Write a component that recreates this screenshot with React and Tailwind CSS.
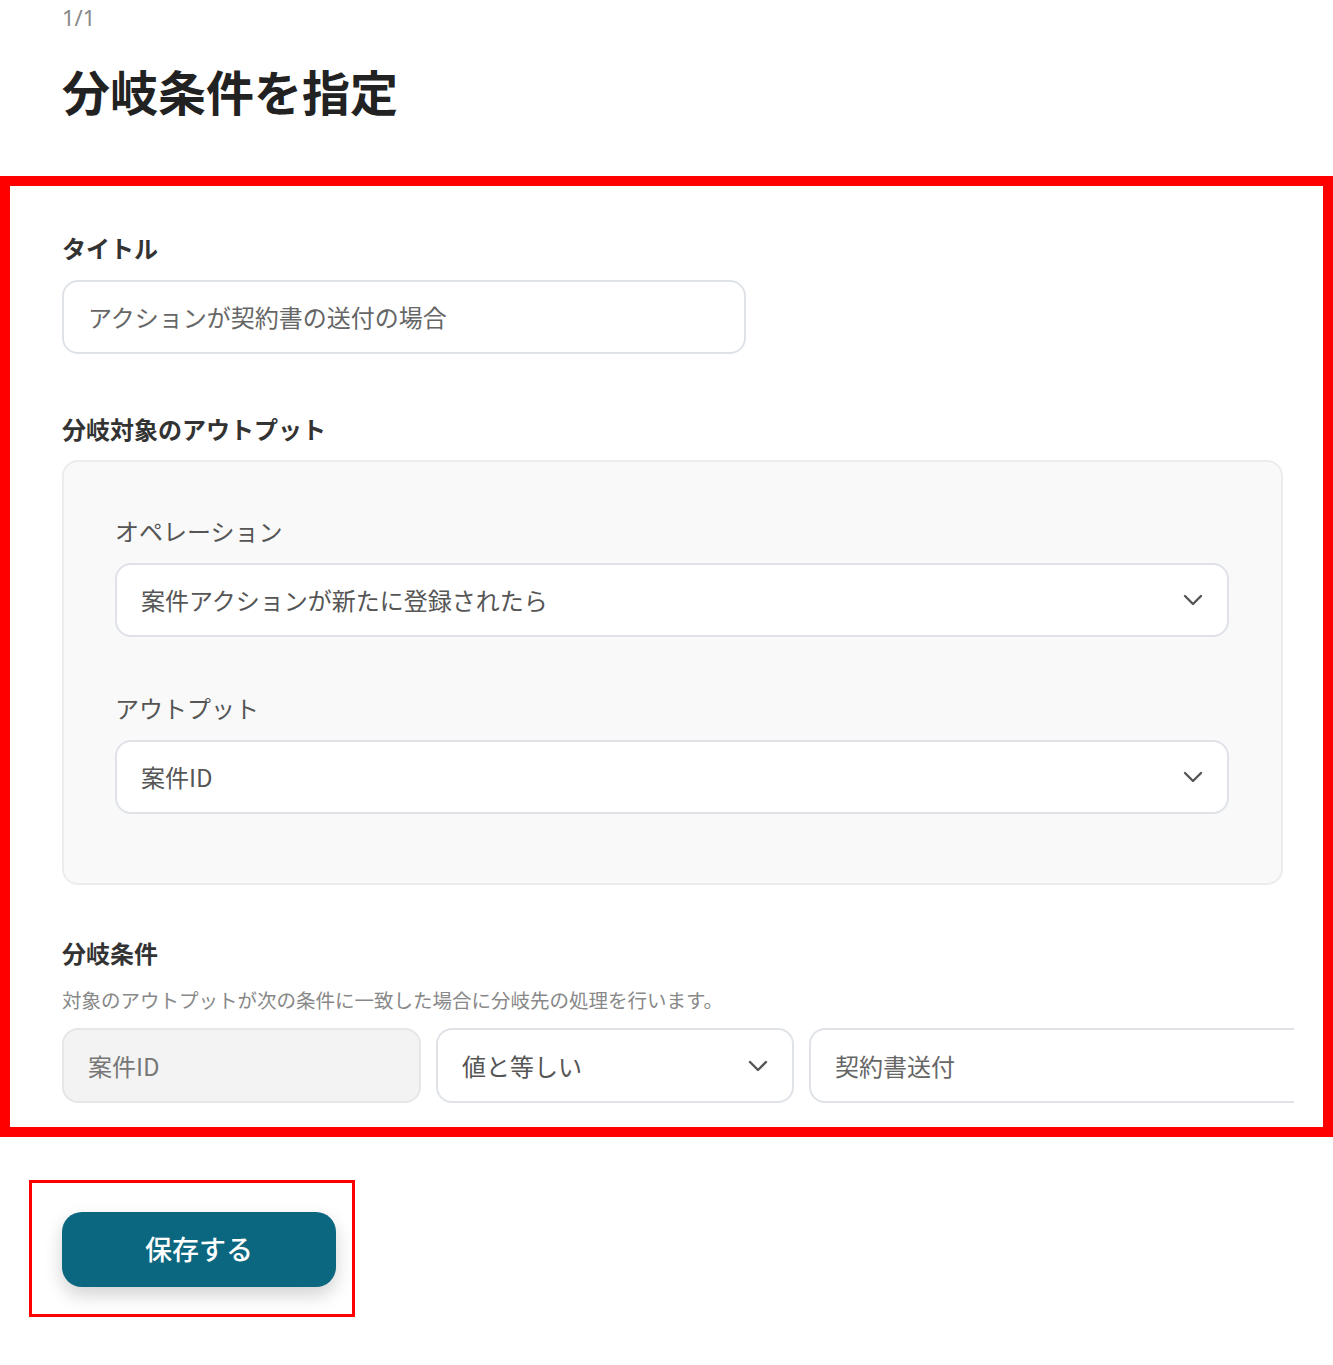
import React from 'react';

const font = { fontFamily: '"Noto Sans CJK JP", "Noto Sans", sans-serif' };

const Chevron = () => (
    <svg width="20" height="12" viewBox="0 0 20 12" fill="none" className="shrink-0">
        <path d="M2 2 L10 10 L18 2" stroke="#555" strokeWidth="2.4" strokeLinecap="round" strokeLinejoin="round" />
    </svg>
);

const SelectBox = ({ value, className = '' }) => (
    <div className={`flex items-center justify-between h-[74px] rounded-[16px] border-2 border-[#dfe3e8] bg-white pl-[24px] pr-[24px] ${className}`}>
        <span className="text-[24px] text-[#555]">{value}</span>
        <Chevron />
    </div>
);

export default function App() {
    return (
        <div className="w-[1333px] min-h-[1365px] bg-white text-[#333]" style={font}>
            <div className="pl-[62px] pt-[3px]">
                <div className="text-[22px] leading-[28px] text-[#888]" style={{ fontFamily: '"Noto Sans", sans-serif' }}>1/1</div>
                <h1 className="mt-[29px] text-[48px] leading-[60px] font-bold text-[#222]">分岐条件を指定</h1>
            </div>

            <div className="mt-[56px] border-[10px] border-[#ff0000] pl-[52px] pt-[44px] pb-[24px]">
                <div className="text-[24px] leading-[36px] font-bold text-[#333]">タイトル</div>
                <div className="mt-[14px] w-[684px] h-[74px] rounded-[16px] border-2 border-[#dfe3e8] flex items-center pl-[24px]">
                    <span className="text-[24px] text-[#666]">アクションが契約書の送付の場合</span>
                </div>

                <div className="mt-[57px] text-[24px] leading-[36px] font-bold text-[#333]">分岐対象のアウトプット</div>
                <div className="mt-[13px] w-[1221px] rounded-[16px] border-2 border-[#ececec] bg-[#f9f9fa] pl-[51px] pr-[52px] pt-[51px] pb-[69px]">
                    <div className="text-[24px] leading-[36px] text-[#555]">オペレーション</div>
                    <SelectBox value="案件アクションが新たに登録されたら" className="mt-[14px]" />
                    <div className="mt-[53px] text-[24px] leading-[36px] text-[#555]">アウトプット</div>
                    <SelectBox value="案件ID" className="mt-[14px]" />
                </div>

                <div className="mt-[50px] text-[24px] leading-[36px] font-bold text-[#333]">分岐条件</div>
                <div className="mt-[15px] text-[19.5px] leading-[28px] text-[#888]">対象のアウトプットが次の条件に一致した場合に分岐先の処理を行います。</div>
                <div className="mt-[14px] w-[1232px] overflow-hidden">
                    <div className="flex gap-[15px] w-[1400px]">
                        <div className="w-[359px] h-[75px] rounded-[16px] border-2 border-[#e6e6e6] bg-[#f3f3f3] flex items-center pl-[24px]">
                            <span className="text-[24px] text-[#777]">案件ID</span>
                        </div>
                        <SelectBox value="値と等しい" className="w-[358px] h-[75px]" />
                        <div className="w-[600px] h-[75px] rounded-[16px] border-2 border-[#dfe3e8] bg-white flex items-center pl-[24px]">
                            <span className="text-[24px] text-[#666]">契約書送付</span>
                        </div>
                    </div>
                </div>
            </div>

            <div className="mt-[43px] ml-[29px] inline-block border-[3px] border-[#ff0000] pl-[30px] pt-[29px] pr-[16px] pb-[27px]">
                <button className="w-[274px] h-[75px] rounded-[20px] bg-[#0b6780] text-white text-[27px] font-medium shadow-[0_8px_18px_rgba(0,0,0,0.18)]" style={font}>
                    保存する
                </button>
            </div>
        </div>
    );
}
